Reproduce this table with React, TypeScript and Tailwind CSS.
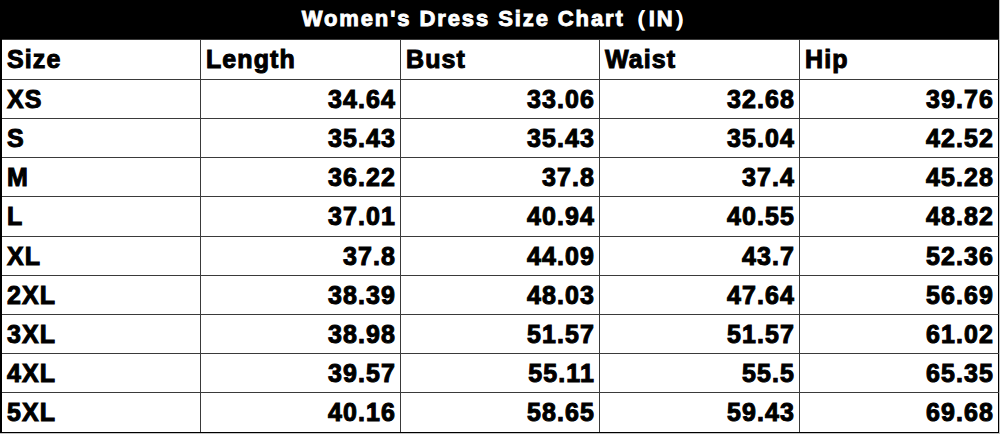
import React from "react";

const rows: [string, string, string, string, string][] = [
  ["XS", "34.64", "33.06", "32.68", "39.76"],
  ["S", "35.43", "35.43", "35.04", "42.52"],
  ["M", "36.22", "37.8", "37.4", "45.28"],
  ["L", "37.01", "40.94", "40.55", "48.82"],
  ["XL", "37.8", "44.09", "43.7", "52.36"],
  ["2XL", "38.39", "48.03", "47.64", "56.69"],
  ["3XL", "38.98", "51.57", "51.57", "61.02"],
  ["4XL", "39.57", "55.11", "55.5", "65.35"],
  ["5XL", "40.16", "58.65", "59.43", "69.68"],
];

const heights = [39, 39, 39, 40, 39, 39, 39, 39, 40];
const widths = ["w-[199px]", "w-[200px]", "w-[199px]", "w-[200px]", "w-[199px]"];

const cellText =
  "font-['Liberation_Sans',Arial,sans-serif] font-bold text-[25px] leading-none tracking-[1.1px] [-webkit-text-stroke:1px_black] text-black";

export default function App() {
  const headers = ["Size", "Length", "Bust", "Waist", "Hip"];
  return (
    <div className="w-[1000px] h-[434px] bg-[#c4c4c4]">
      <div className="w-[999px] h-[433px] bg-white border-l-2 border-black flex flex-col">
        <div className="h-[40px] bg-black flex items-center justify-center border-b border-[#3a3a3a] border-r border-r-black shrink-0 pb-[1px]">
          <span className="font-['Liberation_Sans',Arial,sans-serif] font-bold text-[22px] leading-none tracking-[1.9px] [-webkit-text-stroke:0.9px_white] text-white">
            Women's Dress Size Chart（IN）
          </span>
        </div>
        <div className="h-[40px] flex shrink-0 border-b border-[#3a3a3a]">
          {headers.map((h, i) => (
            <div
              key={h}
              className={`${widths[i]} h-full flex items-center pl-[5px] border-r ${i === 4 ? "border-black" : "border-[#3a3a3a]"}`}
            >
              <span className={cellText}>{h}</span>
            </div>
          ))}
        </div>
        {rows.map((r, ri) => (
          <div
            key={r[0]}
            className={`flex shrink-0 border-b ${ri === rows.length - 1 ? "border-black" : "border-[#3a3a3a]"}`}
            style={{ height: heights[ri] }}
          >
            {r.map((v, i) => (
              <div
                key={i}
                className={`${widths[i]} h-full flex items-center border-r ${i === 4 ? "border-black" : "border-[#3a3a3a]"} ${i === 0 ? "justify-start pl-[5px]" : "justify-end pr-[4px]"}`}
              >
                <span className={cellText}>{v}</span>
              </div>
            ))}
          </div>
        ))}
      </div>
    </div>
  );
}
